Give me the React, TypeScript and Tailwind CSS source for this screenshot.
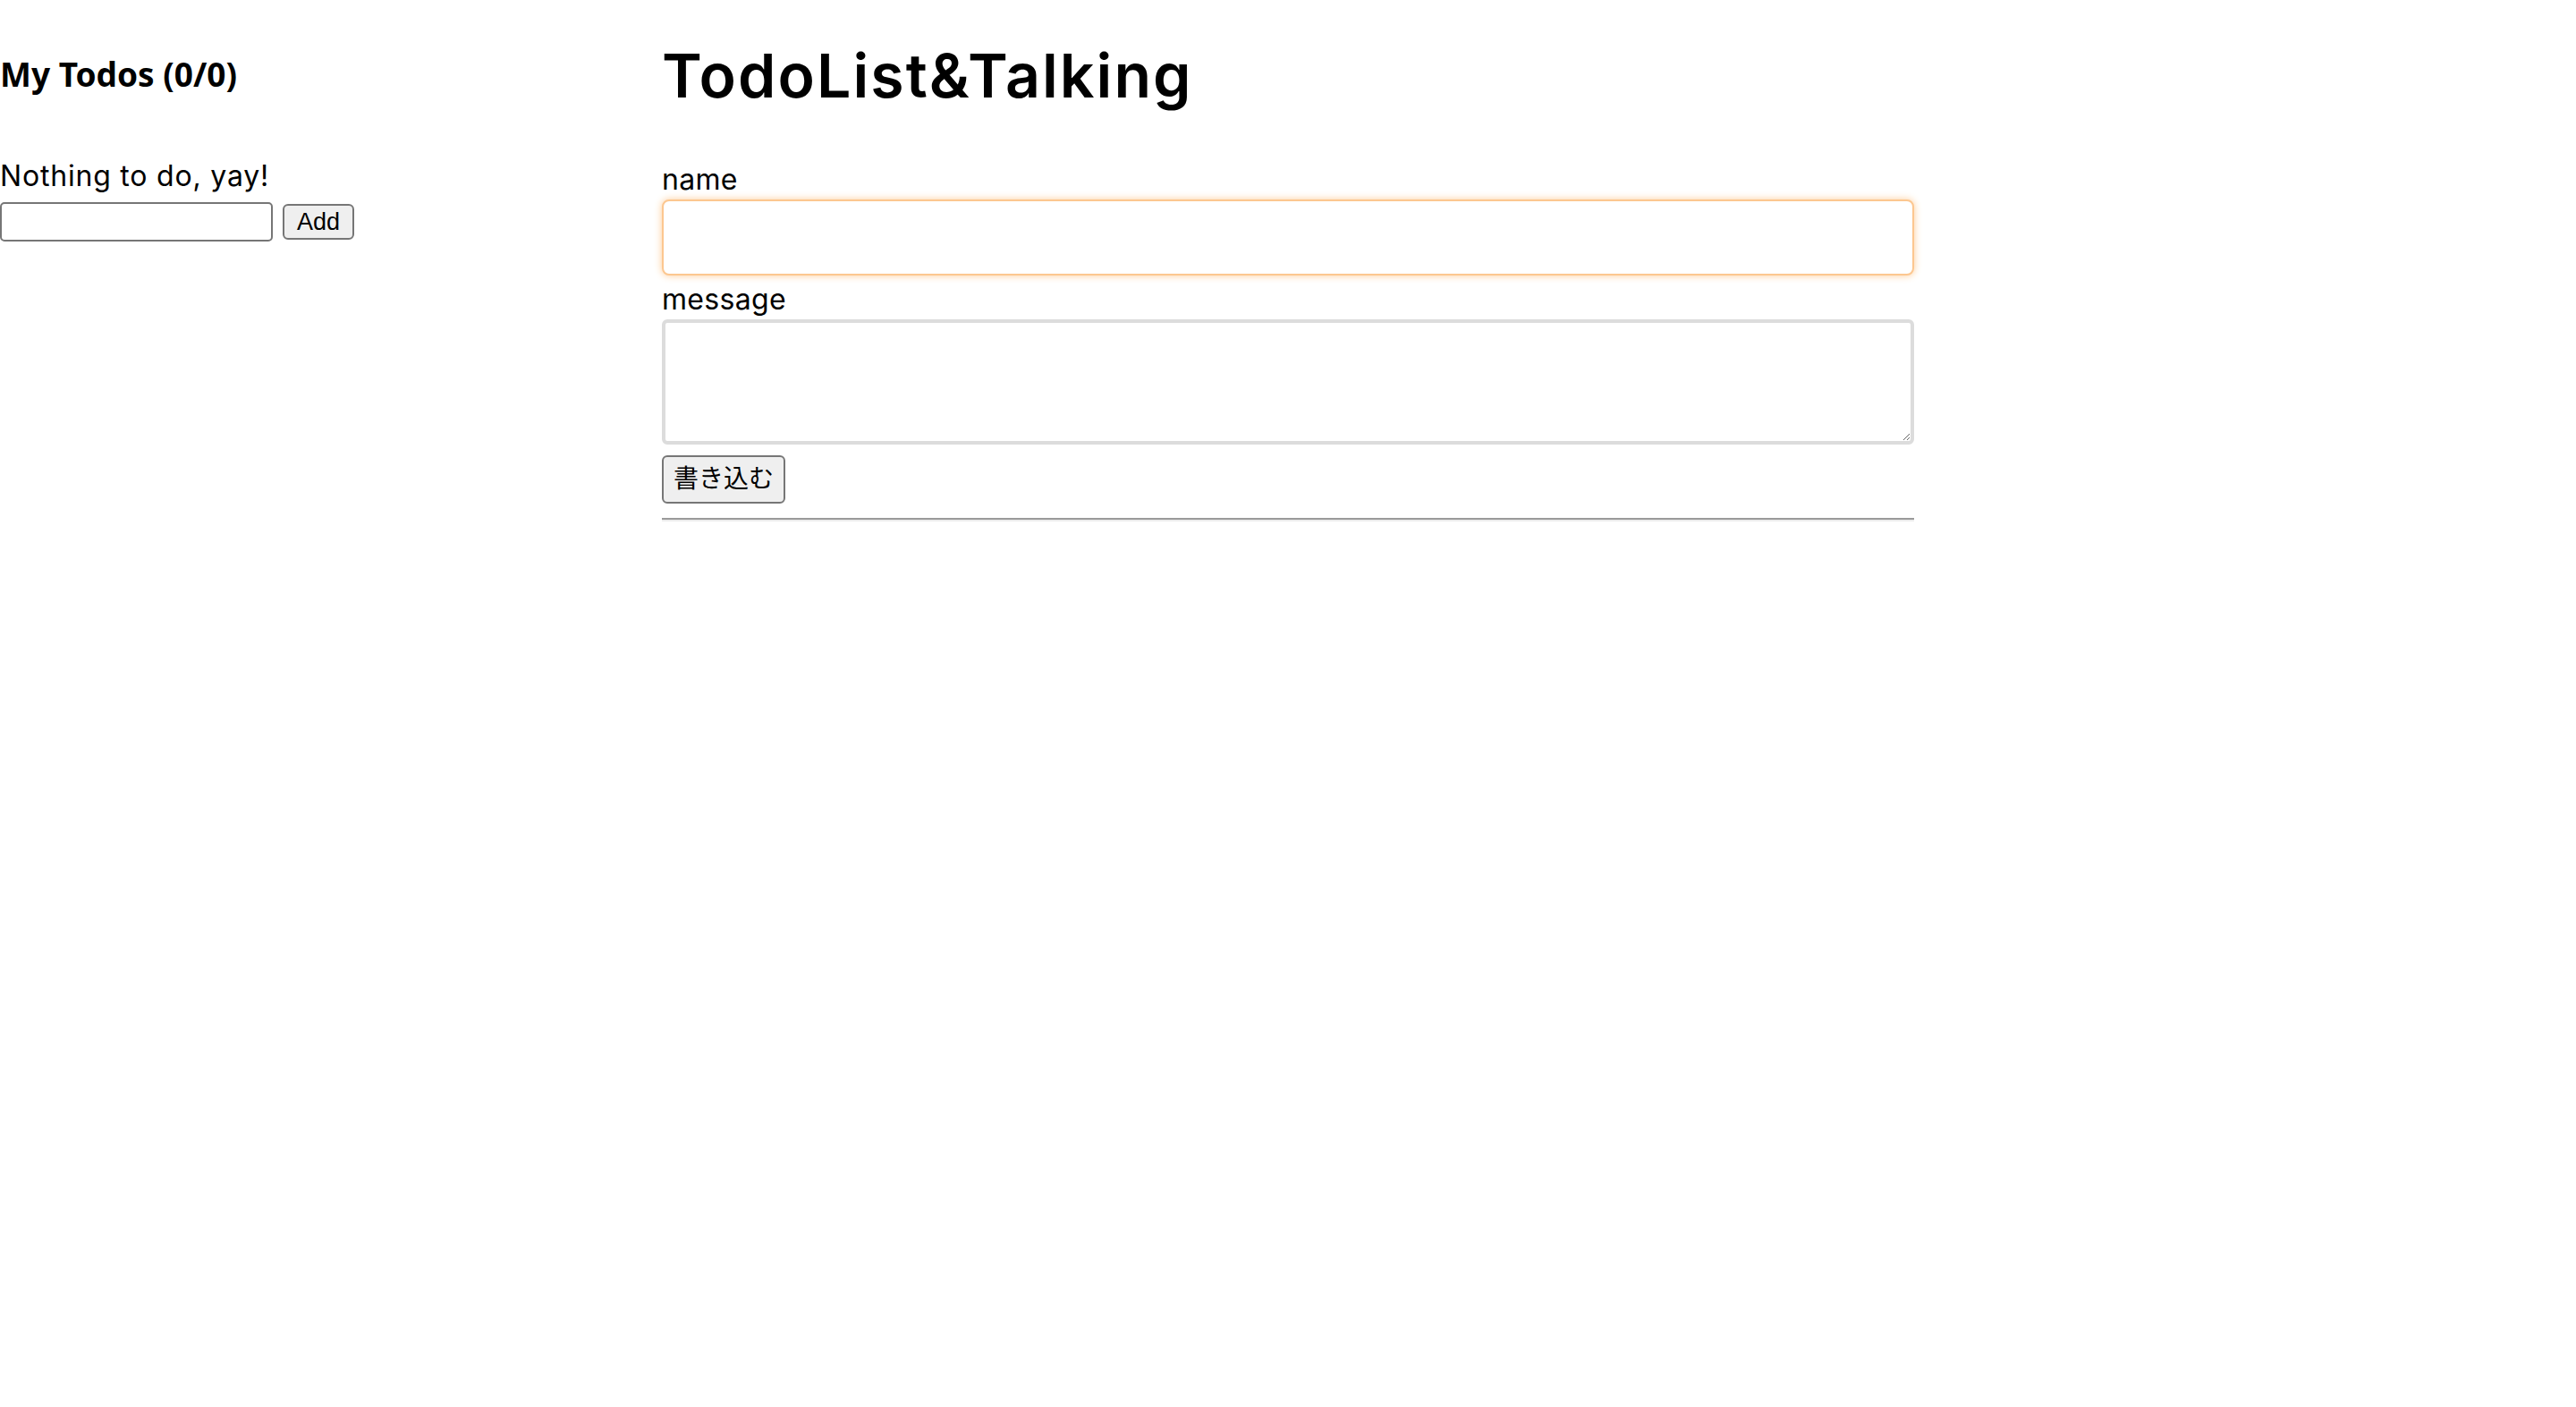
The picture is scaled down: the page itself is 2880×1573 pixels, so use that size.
import React, { useState } from 'react';

const Todos: React.FC = () => {
  const [text, setText] = useState('');
  const [todos, setTodos] = useState<string[]>([]);

  return (
    <div className="pt-[61px]">
      <h3 className="font-['Noto_Sans','Noto_Sans_CJK_JP',sans-serif] text-[37px] font-bold leading-[44px]">
        My Todos ({0}/{todos.length})
      </h3>
      <p className="mt-[72px] text-[32px] leading-[40px] tracking-[0.025em]">
        {todos.length === 0 ? 'Nothing to do, yay!' : ''}
      </p>
      <form
        className="mt-[9px] flex items-center gap-[11px]"
        onSubmit={e => {
          e.preventDefault();
          if (text.trim()) setTodos([...todos, text]);
          setText('');
        }}
      >
        <input
          value={text}
          onChange={e => setText(e.target.value)}
          className="h-[44px] w-[305px] rounded-[5px] border-2 border-[#767676] bg-white px-2 text-[26px]"
        />
        <button
          type="submit"
          className="h-[40px] rounded-[6px] border-2 border-[#767676] bg-[#efefef] px-[14px] font-['Liberation_Sans',sans-serif] text-[27px] leading-none"
        >
          Add
        </button>
      </form>
    </div>
  );
};

const Talking: React.FC = () => {
  return (
    <div className="pt-[44px]">
      <h1 className="text-[68px] font-semibold leading-[80px] tracking-[0.03em]">TodoList&amp;Talking</h1>
      <label className="mt-[56px] block text-[32px] leading-[41px] tracking-[0.01em]">name</label>
      <input className="mt-[2px] block h-[85px] w-full rounded-[8px] border-2 border-[#fcc790] bg-white px-3 text-[32px] shadow-[0_0_9px_#fdcb95] outline-none" />
      <label className="mt-[6px] block text-[32px] leading-[41px] tracking-[0.01em]">message</label>
      <textarea className="mt-[2px] block h-[140px] w-full rounded-[6px] border-4 border-[#dcdcdc] bg-white px-2 text-[28px] outline-none" />
      <button className="mt-[12px] h-[54px] w-[138px] rounded-[6px] border-2 border-[#767676] bg-[#efefef] font-['Liberation_Sans','Noto_Sans_CJK_JP',sans-serif] text-[28px] leading-none">
        書き込む
      </button>
      <div className="mt-[16px] border-t-2 border-b-2 border-t-[#9a9a9a] border-b-[#ececec]" />
    </div>
  );
};

export default function App() {
  return (
    <div className="min-h-screen bg-white text-black font-['Inter','Noto_Sans_CJK_JP',sans-serif] grid grid-cols-[740px_1400px_1fr]">
      <Todos />
      <Talking />
      <div />
    </div>
  );
}
